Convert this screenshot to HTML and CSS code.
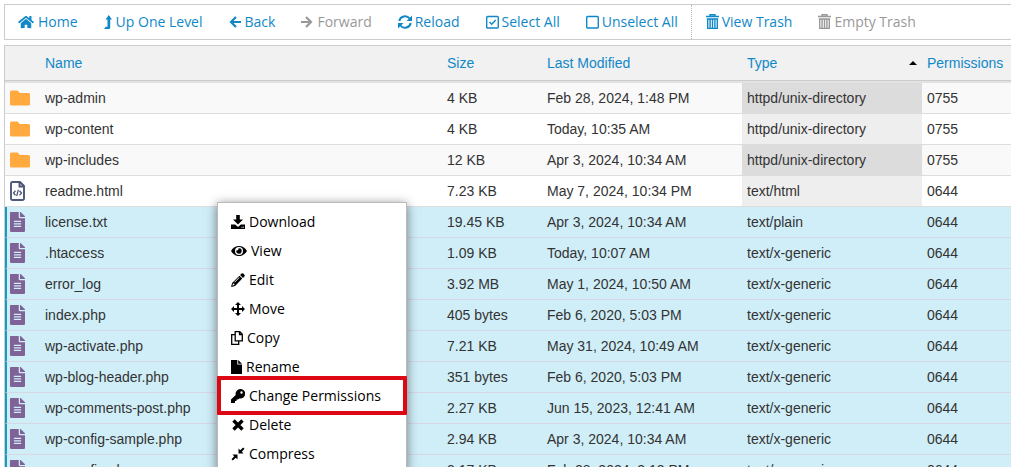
FILE: index.html
```html
<!DOCTYPE html>
<html lang="en">
<head>
<meta charset="utf-8">
<title>File Manager</title>
<link rel="stylesheet" href="styles.css">
</head>
<body>
<svg class="sprite" aria-hidden="true">
  <symbol id="folder" viewBox="0 0 20 16"><path d="M1.500 0.500h6l2.500 2.500h8.500a1.500 1.500 0 0 1 1.500 1.500v9.500a1.500 1.500 0 0 1-1.500 1.500h-17a1.500 1.500 0 0 1-1.500-1.500v-12a1.500 1.500 0 0 1 1.500-1.500z"/></symbol>
  <symbol id="text" viewBox="0 0 384 512"><path d="M224 136V0H24C10.700 0 0 10.700 0 24v464c0 13.300 10.700 24 24 24h336c13.300 0 24-10.700 24-24V160H248c-13.200 0-24-10.800-24-24zm64 236c0 6.600-5.400 12-12 12H108c-6.600 0-12-5.400-12-12v-8c0-6.600 5.400-12 12-12h168c6.600 0 12 5.400 12 12v8zm0-64c0 6.600-5.400 12-12 12H108c-6.600 0-12-5.400-12-12v-8c0-6.600 5.400-12 12-12h168c6.600 0 12 5.400 12 12v8zm0-72v8c0 6.600-5.400 12-12 12H108c-6.600 0-12-5.400-12-12v-8c0-6.600 5.400-12 12-12h168c6.600 0 12 5.400 12 12zm96-114v6H256V0h6c6 0 12 2.500 17 7l98 98c4.500 4.500 7 10.600 7 17z"/></symbol>
  <symbol id="code" viewBox="0 0 15 20"><path d="M1 2.500A1.500 1.500 0 0 1 2.500 1H10l4 4v12.500a1.500 1.500 0 0 1-1.500 1.500h-10A1.500 1.500 0 0 1 1 17.500zM9.500 1v4.500H14" fill="none" stroke="currentColor" stroke-width="1.900"/><path d="M5.500 9.800L3.500 12l2 2.200M9.500 9.800l2 2.200-2 2.200M8.300 8.800l-1.600 6.400" fill="none" stroke="currentColor" stroke-width="1.300"/></symbol>
  <symbol id="home" viewBox="0 0 576 512"><path d="M280 148L96 300v164a16 16 0 0 0 16 16l112-.3a16 16 0 0 0 16-16V368a16 16 0 0 1 16-16h64a16 16 0 0 1 16 16v95.600a16 16 0 0 0 16 16L464 480a16 16 0 0 0 16-16V300L296 148a12 12 0 0 0-16 0zM572 251l-84-69V44a12 12 0 0 0-12-12h-56a12 12 0 0 0-12 12v72l-90-74a48 48 0 0 0-61 0L4 251a12 12 0 0 0-1.600 17l25.500 31a12 12 0 0 0 17 1.600L280 107a12 12 0 0 1 16 0l235 194a12 12 0 0 0 17-1.600l25.500-31a12 12 0 0 0-1.500-17.400z"/></symbol>
  <symbol id="up" viewBox="0 0 8 14"><path d="M4.800 0L8 4.500H6.200v8.200a1.300 1.300 0 0 1-1.300 1.300H0l1.700-2.200h1.800V4.500H1.500z"/></symbol>
  <symbol id="left" viewBox="0 0 12 14"><path d="M7 2L2 7l5 5M2 7h10" fill="none" stroke="currentColor" stroke-width="2.200"/></symbol>
  <symbol id="right" viewBox="0 0 12 14"><path d="M5 2l5 5-5 5M0 7h10" fill="none" stroke="currentColor" stroke-width="2.200"/></symbol>
  <symbol id="reload" viewBox="0 0 14 14"><path d="M1.300 6A5.800 5.800 0 0 1 11.600 3.500M12.700 8A5.800 5.800 0 0 1 2.400 10.500" fill="none" stroke="currentColor" stroke-width="2"/><path d="M14 .5V6H8.500zM0 13.500V8h5.500z"/></symbol>
  <symbol id="checked" viewBox="0 0 13 14"><path d="M1.700 1.500h9.600a1 1 0 0 1 1 1v9.500a1 1 0 0 1-1 1H1.700a1 1 0 0 1-1-1V2.500a1 1 0 0 1 1-1zM3.500 7l2.200 2.300 4-4.300" fill="none" stroke="currentColor" stroke-width="1.400"/></symbol>
  <symbol id="unchecked" viewBox="0 0 13 14"><path d="M1.700 1.500h9.600a1 1 0 0 1 1 1v9.500a1 1 0 0 1-1 1H1.700a1 1 0 0 1-1-1V2.500a1 1 0 0 1 1-1z" fill="none" stroke="currentColor" stroke-width="1.400"/></symbol>
  <symbol id="trash" viewBox="0 0 13 16"><path d="M0 2.500h13M4 2.500V.7h5v1.800M.8 5h11.400M1.700 5v9.400h9.600V5M4.100 5v9M6.500 5v9M8.900 5v9" fill="none" stroke="currentColor" stroke-width="1.400"/></symbol>
  <symbol id="download" viewBox="0 0 14 14"><path d="M5.200 0h3.600v4.500H12L7 9.500 2 4.500h3.200zM0 9.500h4.200L7 12l2.800-2.500H14V14H0zM10.500 11.800v1h1v-1zm1.700 0v1h.8v-1z" fill-rule="evenodd"/></symbol>
  <symbol id="eye" viewBox="0 0 16 14"><path d="M0 7C3.500.3 12.500.3 16 7 12.500 13.700 3.500 13.700 0 7zm8-4a4 4 0 1 0 0 8 4 4 0 0 0 0-8zM8 4.300a2.700 2.700 0 1 1-2.600 2A1.400 1.400 0 0 0 7.300 4.400z" fill-rule="evenodd"/></symbol>
  <symbol id="pencil" viewBox="0 0 14 14"><path d="M10.500.6a1.300 1.300 0 0 1 1.800 0l1.100 1.100a1.300 1.300 0 0 1 0 1.800L12 4.900 9.100 2zM8.400 2.700l2.900 2.900-7.200 7.300L0 14l1.100-4.100zM2 10.500l-.6 2.100 2.100-.6-.3-1.200zM8 4.300l-4.700 4.800.4.400L8.500 4.700z" fill-rule="evenodd"/></symbol>
  <symbol id="move" viewBox="0 0 14 14"><path d="M7 0l3 3H8v3h3V4l3 3-3 3V8H8v3h2l-3 3-3-3h2V8H3v2L0 7l3-3v2h3V3H4z"/></symbol>
  <symbol id="copy" viewBox="0 0 12 14"><path d="M4.200.7h4.600l2.500 2.500v6.600H4.200zM8.500.7v2.800h2.800M4 3.700H.7v9.600h7V10" fill="none" stroke="currentColor" stroke-width="1.300"/></symbol>
  <symbol id="file" viewBox="0 0 11 14"><path d="M0 0h6.300v4.500H11V14H0zM7.200 0L11 3.700H7.200z"/></symbol>
  <symbol id="key" viewBox="0 0 14 14"><path d="M9.200 0a4.800 4.800 0 1 1-1.100 9.400L7 10.500H5.500V12H4v2H0v-3.500l4.700-4.600A4.800 4.800 0 0 1 9.200 0zm1.300 2.300a1.200 1.200 0 1 0 0 2.400 1.200 1.200 0 0 0 0-2.400z" fill-rule="evenodd"/></symbol>
  <symbol id="times" viewBox="0 0 14 14"><path d="M2.500 2.500l9 9M11.500 2.500l-9 9" fill="none" stroke="currentColor" stroke-width="3.400"/></symbol>
  <symbol id="compress" viewBox="0 0 14 14"><path d="M7.500 1.500l1.700 1.700L12.200.5 13.500 1.800l-2.700 3 1.700 1.700h-5zM6.500 12.500l-1.700-1.700-3 2.700L.5 12.200l2.700-3L1.500 7.500h5z"/></symbol>
</svg>

<div class="toolbar" role="toolbar" aria-label="File actions">
  <button class="tool"><svg class="icon-wide"><use href="#home"/></svg>Home</button>
  <button class="tool"><svg class="icon-thin"><use href="#up"/></svg>Up One Level</button>
  <button class="tool"><svg class="icon-mid"><use href="#left"/></svg>Back</button>
  <button class="tool" disabled><svg class="icon-mid"><use href="#right"/></svg>Forward</button>
  <button class="tool compact"><svg class="icon"><use href="#reload"/></svg>Reload</button>
  <button class="tool compact"><svg class="icon-box"><use href="#checked"/></svg>Select All</button>
  <button class="tool compact"><svg class="icon-box"><use href="#unchecked"/></svg>Unselect All</button>
  <span class="divider"></span>
  <button class="tool compact"><svg class="icon-trash"><use href="#trash"/></svg>View Trash</button>
  <button class="tool compact" disabled><svg class="icon-trash"><use href="#trash"/></svg>Empty Trash</button>
</div>

<table class="files">
  <colgroup><col class="col-icon"><col><col class="col-size"><col class="col-date"><col class="col-type"><col class="col-perm"></colgroup>
  <thead>
    <tr><th></th><th>Name</th><th>Size</th><th>Last Modified</th><th aria-sort="ascending"><span class="sorted">Type<i class="caret"></i></span></th><th>Permissions</th></tr>
  </thead>
  <tbody>
    <tr><td><svg class="folder"><use href="#folder"/></svg></td><td>wp-admin</td><td>4 KB</td><td>Feb 28, 2024, 1:48 PM</td><td>httpd/unix-directory</td><td>0755</td></tr>
    <tr><td><svg class="folder"><use href="#folder"/></svg></td><td>wp-content</td><td>4 KB</td><td>Today, 10:35 AM</td><td>httpd/unix-directory</td><td>0755</td></tr>
    <tr><td><svg class="folder"><use href="#folder"/></svg></td><td>wp-includes</td><td>12 KB</td><td>Apr 3, 2024, 10:34 AM</td><td>httpd/unix-directory</td><td>0755</td></tr>
    <tr><td><svg class="doc code"><use href="#code"/></svg></td><td>readme.html</td><td>7.23 KB</td><td>May 7, 2024, 10:34 PM</td><td>text/html</td><td>0644</td></tr>
    <tr class="selected"><td><svg class="doc"><use href="#text"/></svg></td><td>license.txt</td><td>19.45 KB</td><td>Apr 3, 2024, 10:34 AM</td><td>text/plain</td><td>0644</td></tr>
    <tr class="selected"><td><svg class="doc"><use href="#text"/></svg></td><td>.htaccess</td><td>1.09 KB</td><td>Today, 10:07 AM</td><td>text/x-generic</td><td>0644</td></tr>
    <tr class="selected"><td><svg class="doc"><use href="#text"/></svg></td><td>error_log</td><td>3.92 MB</td><td>May 1, 2024, 10:50 AM</td><td>text/x-generic</td><td>0644</td></tr>
    <tr class="selected"><td><svg class="doc"><use href="#text"/></svg></td><td>index.php</td><td>405 bytes</td><td>Feb 6, 2020, 5:03 PM</td><td>text/x-generic</td><td>0644</td></tr>
    <tr class="selected"><td><svg class="doc"><use href="#text"/></svg></td><td>wp-activate.php</td><td>7.21 KB</td><td>May 31, 2024, 10:49 AM</td><td>text/x-generic</td><td>0644</td></tr>
    <tr class="selected"><td><svg class="doc"><use href="#text"/></svg></td><td>wp-blog-header.php</td><td>351 bytes</td><td>Feb 6, 2020, 5:03 PM</td><td>text/x-generic</td><td>0644</td></tr>
    <tr class="selected"><td><svg class="doc"><use href="#text"/></svg></td><td>wp-comments-post.php</td><td>2.27 KB</td><td>Jun 15, 2023, 12:41 AM</td><td>text/x-generic</td><td>0644</td></tr>
    <tr class="selected"><td><svg class="doc"><use href="#text"/></svg></td><td>wp-config-sample.php</td><td>2.94 KB</td><td>Apr 3, 2024, 10:34 AM</td><td>text/x-generic</td><td>0644</td></tr>
    <tr class="selected"><td><svg class="doc"><use href="#text"/></svg></td><td>wp-config.php</td><td>3.17 KB</td><td>Feb 28, 2024, 2:13 PM</td><td>text/x-generic</td><td>0644</td></tr>
  </tbody>
</table>

<div class="menu" role="menu">
  <button class="item" role="menuitem"><svg class="icon"><use href="#download"/></svg>Download</button>
  <button class="item" role="menuitem"><svg class="icon-wide"><use href="#eye"/></svg>View</button>
  <button class="item" role="menuitem"><svg class="icon"><use href="#pencil"/></svg>Edit</button>
  <button class="item" role="menuitem"><svg class="icon"><use href="#move"/></svg>Move</button>
  <button class="item" role="menuitem"><svg class="icon-mid"><use href="#copy"/></svg>Copy</button>
  <button class="item" role="menuitem"><svg class="icon-file"><use href="#file"/></svg>Rename</button>
  <button class="item highlighted" role="menuitem"><svg class="icon"><use href="#key"/></svg>Change Permissions</button>
  <button class="item" role="menuitem"><svg class="icon"><use href="#times"/></svg>Delete</button>
  <button class="item" role="menuitem"><svg class="icon"><use href="#compress"/></svg>Compress</button>
</div>
</body>
</html>
```

FILE: styles.css
```css
* { box-sizing: border-box; }

body {
  margin: 0;
  padding: 4px 0 0 4px;
  height: 100vh;
  overflow: hidden;
  background: #fff;
  color: #333;
  font: 14px/20px "Liberation Sans", Arial, sans-serif;
}

.sprite { display: none; }

svg { flex: none; fill: currentColor; }

button {
  border: 0;
  background: none;
  font: 14px/20px "Open Sans", sans-serif;
  white-space: nowrap;
  cursor: pointer;
}

.icon { width: 14px; height: 14px; }
.icon-wide { width: 16px; height: 14px; }
.icon-mid { width: 12px; height: 14px; }
.icon-thin { width: 8px; height: 14px; }
.icon-box { width: 13px; height: 14px; }
.icon-file { width: 11px; height: 14px; }
.icon-trash { width: 13px; height: 16px; }

.toolbar {
  display: flex;
  height: 36px;
  margin-bottom: 5px;
  border: 1px solid #ccc;
  border-right: 0;
}

.tool {
  display: flex;
  align-items: center;
  gap: 4px;
  padding: 0 13px;
  color: #1088c8;
}

.compact { gap: 3px; }

.tool:disabled { color: #999; cursor: default; }

.divider { margin-right: 1px; border-left: 1px dotted #bbb; }

.files {
  width: 100%;
  table-layout: fixed;
  border-collapse: separate;
  border-spacing: 0;
  border-left: 1px solid #ccc;
}

.col-icon { width: 35px; }
.col-size { width: 100px; }
.col-date { width: 200px; }
.col-type { width: 180px; }
.col-perm { width: 89px; }

th {
  height: 36px;
  padding: 0 5px;
  border-top: 1px solid #ccc;
  border-bottom: 1px solid #ccc;
  background: #f1f1f1;
  color: #1088c8;
  font-weight: normal;
  text-align: left;
}

td {
  height: 31px;
  padding: 0 5px;
  border-bottom: 1px solid #ddd;
  overflow: hidden;
  white-space: nowrap;
}

td:first-child { padding: 0 0 0 5px; }

tbody tr:first-child td { height: 33px; border-top: 2px solid #e2e2e2; }
tbody tr:nth-child(odd) { background: #f9f9f9; }
tbody td:nth-child(5) { background: #eee; }
tbody tr:nth-child(odd) td:nth-child(5) { background: #dcdcdc; }

tbody tr.selected,
tbody tr.selected td:nth-child(5) { background: #d0eef8; }
.selected td { border-bottom-color: #d8d8e4; }
.selected td:first-child { padding-left: 3px; border-left: 2px solid #179bbe; }

.sorted { display: flex; align-items: center; justify-content: space-between; }

.caret {
  border: 4px solid transparent;
  border-top: 0;
  border-bottom-color: #000;
}

.folder, .doc { display: block; height: 20px; }
.folder { width: 20px; height: 16px; color: #ffa93f; }
.doc { width: 15px; color: #7f6397; }
.code { color: #4b5878; }

.menu {
  position: absolute;
  top: 202px;
  left: 217px;
  width: 190px;
  padding: 4px 0;
  border: 1px solid #bbb;
  background: #fff;
  box-shadow: 0 2px 10px rgba(0, 0, 0, .5);
}

.item {
  display: flex;
  align-items: center;
  gap: 4px;
  width: 100%;
  height: 29px;
  padding: 0 13px;
  color: #000;
}

.highlighted { position: relative; }

/* Frame drawn over the neighbouring items */
.highlighted::after {
  content: "";
  position: absolute;
  inset: -5px -1px;
  border: 4px solid #dc0814;
  border-radius: 1px;
}
```
